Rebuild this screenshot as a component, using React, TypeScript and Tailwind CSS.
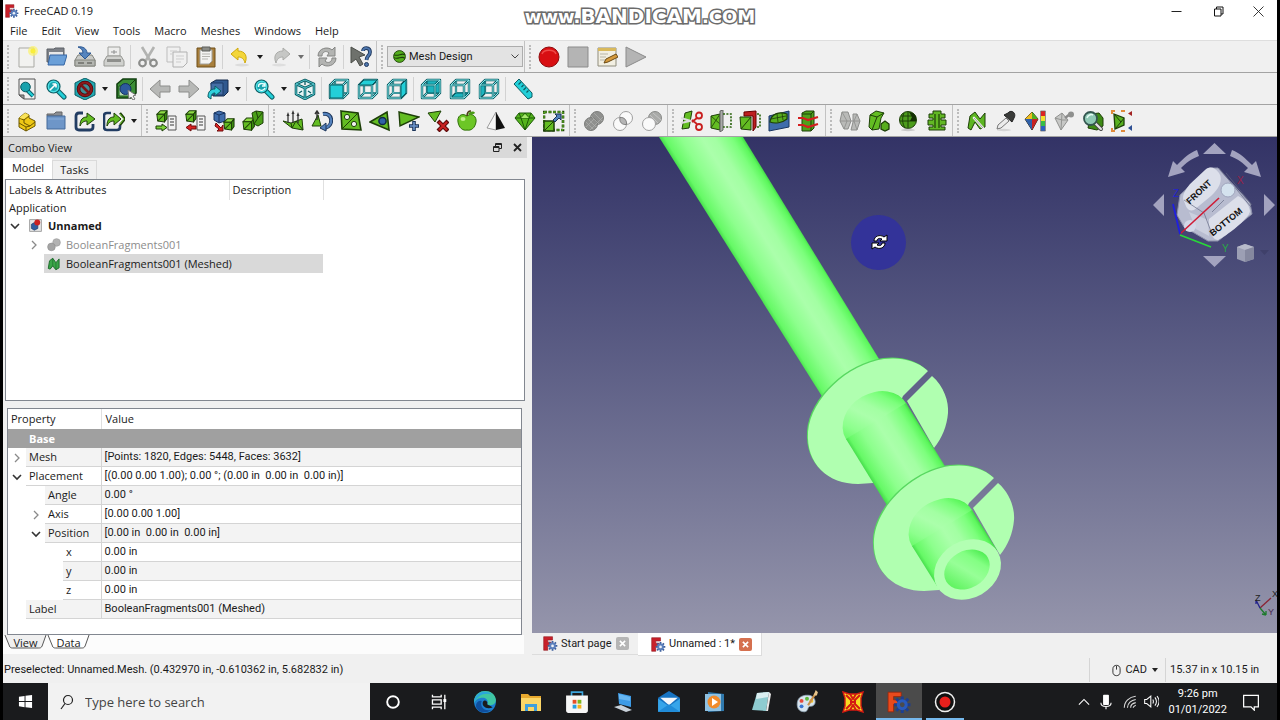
import React from "react";

type Kids = { children?: React.ReactNode };

const DARK = "#1d3f08";
const GREEN = "#63bd22";
const TEAL = "#23cfd8";
const TEAL_DARK = "#0b5c63";

function Ic({ children, size = "size-[22px]" }: Kids & { size?: string }) {
  return (
    <svg viewBox="0 0 22 22" className={`${size} shrink-0`} fill="none" aria-hidden="true">
      {children}
    </svg>
  );
}

function FreeCadLogo({ size = "size-[14px]" }: { size?: string }) {
  return (
    <Ic size={size}>
      <path d="M1 1H14V6H7V9H12V13H7V21H1Z" fill="#c8202a" stroke="#8a0f16" strokeWidth="0.8" />
      <g stroke="#3c5f9c" strokeWidth="2.6">
        <path d="M14 7.500V21.500M7 14.500H21M9 9.500L19 19.500M19 9.500L9 19.500" />
      </g>
      <circle cx="14" cy="14.500" r="4.800" fill="#5b80bd" />
      <circle cx="14" cy="14.500" r="2" fill="#eef2f8" />
    </Ic>
  );
}

type Face = "front" | "top" | "right" | "rear" | "bottom" | "left";
const facePath: Record<Face, string> = {
  front: "M2 7H15V20H2Z",
  top: "M2 7L7 2H20L15 7Z",
  right: "M15 7L20 2V15L15 20Z",
  rear: "M7 2H20V15H7Z",
  bottom: "M2 20L7 15H20L15 20Z",
  left: "M2 7L7 2V15L2 20Z",
};

function ViewCube({ face }: { face: Face }) {
  const back = "M7 2V15H20M7 15L2 20";
  const front = "M2 7H15V20H2ZM2 7L7 2H20V15L15 20M15 7L20 2";
  const near = face === "front" || face === "top" || face === "right";
  return (
    <Ic>
      <g strokeLinejoin="round">
        <path d={back} stroke={TEAL_DARK} strokeWidth="2.200" />
        <path d={back} stroke="#7fe3e8" strokeWidth="0.900" />
        {!near && <path d={facePath[face]} fill="#1cb4be" stroke={TEAL_DARK} />}
        <path d={front} stroke={TEAL_DARK} strokeWidth="2.400" />
        <path d={front} stroke="#8beaee" strokeWidth="1" />
        {near && <path d={facePath[face]} fill={TEAL} stroke={TEAL_DARK} />}
      </g>
    </Ic>
  );
}

function Lens({ inner }: { inner?: React.ReactNode }) {
  return (
    <>
      <path d="M13 13L19 19" stroke={TEAL_DARK} strokeWidth="5" strokeLinecap="round" />
      <path d="M13 13L19 19" stroke={TEAL} strokeWidth="3" strokeLinecap="round" />
      <circle cx="8.500" cy="8.500" r="6.500" fill="#4be0e6" stroke={TEAL_DARK} strokeWidth="1.200" />
      <circle cx="8.500" cy="8.500" r="4.500" fill="#1aa3ae" />
      {inner}
    </>
  );
}

function MeshBox({ x = 0, y = 0, s = 1, c = GREEN }: { x?: number; y?: number; s?: number; c?: string }) {
  return (
    <g transform={`translate(${x} ${y}) scale(${s})`} stroke={DARK} strokeWidth={1 / s} strokeLinejoin="round">
      <path d="M1 5L5 1H13L10 5Z" fill="#8fdc45" />
      <path d="M1 5H10V14L2 13Z" fill={c} />
      <path d="M10 5L13 1V10L10 14Z" fill="#3c8a10" />
      <path d="M2 13L10 5" />
    </g>
  );
}

const icons = {
  newDoc: (
    <Ic>
      <path d="M3 2H18V21H3Z" fill="#f2f2f0" stroke="#a9a9a4" />
      <circle cx="17" cy="5" r="5" fill="#fbf26a" opacity="0.700" />
      <circle cx="17" cy="5" r="2.500" fill="#f9ee3c" />
    </Ic>
  ),
  open: (
    <Ic>
      <path d="M2 3H9L10 2H19V16H2Z" fill="#7c8087" stroke="#5c6066" />
      <path d="M4 6H18V12H4Z" fill="#e8e8e8" />
      <path d="M3 19L5 9H22L19 19Z" fill="#6a9fd8" stroke="#3465a4" />
    </Ic>
  ),
  save: (
    <Ic>
      <path d="M1 14L4 9H18L21 14V20H1Z" fill="#c9cac7" stroke="#83857f" />
      <path d="M1 14H21V20H1Z" fill="#b4b6b1" stroke="#83857f" />
      <path d="M4 1C9 0 13 3 13 7H17L11 13L5 7H9C9 4 7 2 4 1Z" fill="#5584be" stroke="#2c5791" />
      <path d="M4 17H10M13 17H18" stroke="#6d6f6a" strokeWidth="1.500" />
    </Ic>
  ),
  print: (
    <Ic>
      <path d="M5 1H17V10H5Z" fill="#ededec" stroke="#a0a19d" />
      <path d="M8 6H14M11 4V8" stroke="#8f9090" />
      <path d="M1 15L4 10H18L21 15V20H1Z" fill="#d0d1ce" stroke="#979894" />
      <path d="M4 13H18V16H4Z" fill="#8e8f8c" />
    </Ic>
  ),
  cut: (
    <Ic>
      <path d="M5 1L14 16M17 1L8 16" stroke="#b2b3b1" strokeWidth="2.600" />
      <circle cx="5.500" cy="17" r="3.300" stroke="#8c8d8b" strokeWidth="2.200" />
      <circle cx="16.500" cy="17" r="3.300" stroke="#8c8d8b" strokeWidth="2.200" />
    </Ic>
  ),
  copy: (
    <Ic>
      <path d="M1 1H14V16H1Z" fill="#f0f0f0" stroke="#bdbdbd" />
      <path d="M7 6H21V17L17 21H7Z" fill="#f0f0f0" stroke="#b0b0b0" />
      <path d="M4 5H11M4 8H6M10 10H18M10 13H18M10 16H15" stroke="#cdcdcd" />
    </Ic>
  ),
  paste: (
    <Ic>
      <path d="M2 2H20V21H2Z" fill="#a87f3c" stroke="#6f4f18" />
      <path d="M5 4H17V15L14 18H5Z" fill="#f4f4f2" stroke="#a3a39e" />
      <path d="M7 1H15V5H7Z" fill="#8c8d88" stroke="#5d5e5a" />
      <path d="M7 8H15M7 10.500H15M7 13H13" stroke="#b5b5b0" />
    </Ic>
  ),
  undo: (
    <Ic>
      <ellipse cx="13" cy="19" rx="7" ry="1.500" fill="#dcdcdc" />
      <path d="M2 8L9 2V5C16 5 19 10 16 17C15 13 13 11 9 11V14Z" fill="#f3d63a" stroke="#cfa90c" />
    </Ic>
  ),
  redo: (
    <Ic>
      <ellipse cx="9" cy="19" rx="7" ry="1.500" fill="#dedede" />
      <path d="M20 8L13 2V5C6 5 3 10 6 17C7 13 9 11 13 11V14Z" fill="#c6c7c5" stroke="#aaaba8" />
    </Ic>
  ),
  refresh: (
    <Ic>
      <g fill="#b3b4b2" stroke="#858684">
        <path d="M2 10C2 2 12 0 16 4L19 1V10H11L13 7C10 4 6 6 6 10Z" />
        <path d="M20 12C20 20 10 22 6 18L3 21V12H11L9 15C12 18 16 16 16 12Z" />
      </g>
    </Ic>
  ),
  whats: (
    <Ic>
      <path d="M1 1L15 9L9 11L13 18L10 20L6 13L1 17Z" fill="#6e716c" stroke="#4b4e49" />
      <path d="M13 5C13 1 20 1 20 6C20 10 17 9 16.500 14" stroke="#20395e" strokeWidth="3.800" />
      <path d="M13 5C13 1 20 1 20 6C20 10 17 9 16.500 14" stroke="#4e76ad" strokeWidth="2" />
      <circle cx="16.500" cy="18.500" r="2" fill="#4e76ad" stroke="#20395e" />
    </Ic>
  ),
  record: (
    <Ic>
      <circle cx="11" cy="11" r="10" fill="#d80f12" stroke="#8f0a0c" />
      <path d="M4 8C6 3 16 3 18 8" stroke="#ee4a48" strokeWidth="1.500" />
    </Ic>
  ),
  stop: (
    <Ic>
      <path d="M1 1H21V21H1Z" fill="#b4b4b4" stroke="#8b8b8b" />
    </Ic>
  ),
  macro: (
    <Ic>
      <path d="M2 2H20V20H2Z" fill="#f2efe2" stroke="#8f8c7c" />
      <path d="M2 2H20V5H2Z" fill="#d9b95c" />
      <path d="M4 8H12M4 11H10M4 14H9" stroke="#b7b5a8" />
      <path d="M8 17L10 13L20 8L22 11L12 16Z" fill="#d59a3d" stroke="#6b4a14" />
    </Ic>
  ),
  play: (
    <Ic>
      <path d="M1 1L21 11L1 21Z" fill="#b4b4b4" stroke="#8b8b8b" />
    </Ic>
  ),
  fitAll: (
    <Ic>
      <path d="M3 1H19V21H8L3 17Z" fill="#f1f1f1" stroke="#555" />
      <path d="M3 17H8V21Z" fill="#9b9b9b" stroke="#555" />
      <path d="M11 12L17 18" stroke={TEAL_DARK} strokeWidth="4" />
      <path d="M11 12L17 18" stroke={TEAL} strokeWidth="2.200" />
      <circle cx="9.500" cy="9" r="4.800" fill="#18a2ad" stroke={TEAL_DARK} />
    </Ic>
  ),
  fitSel: (
    <Ic>
      <Lens inner={<path d="M5 12L11 6M11 6H7.500M11 6V9.500" stroke="#fff" strokeWidth="1.600" />} />
    </Ic>
  ),
  drawStyle: (
    <Ic>
      <path d="M11 0L21 5V17L11 22L1 17V5Z" fill="#22a8b2" stroke={TEAL_DARK} />
      <circle cx="11" cy="11" r="6.500" fill="#3f8f97" stroke="#4a0507" strokeWidth="3.600" />
      <circle cx="11" cy="11" r="6.500" stroke="#8c1a1d" strokeWidth="2.200" />
      <path d="M6.500 6.500L15.500 15.500" stroke="#7d1316" strokeWidth="2.600" />
    </Ic>
  ),
  boundBox: (
    <Ic>
      <path d="M2 6L8 1H21V15L16 20H2Z" fill="#3b8e36" stroke="#123f10" strokeWidth="1.600" />
      <path d="M4 8H15V18H4Z" fill="#b9dcb4" stroke="#1a5a17" />
      <path d="M15 7L20 2" stroke="#0f3b0d" />
      <circle cx="10.500" cy="11" r="5.500" fill="#2c5a9c" stroke="#14325f" />
      <path d="M13 12L21 17L18 18L20 21L18 22L16 19L14 21Z" fill="#f5f5f5" stroke="#777" />
    </Ic>
  ),
  back: (
    <Ic>
      <path d="M1 11L11 2V8H21V14H11V20Z" fill="#b7b8b6" stroke="#8c8d8b" />
    </Ic>
  ),
  forward: (
    <Ic>
      <path d="M21 11L11 2V8H1V14H11V20Z" fill="#b7b8b6" stroke="#8c8d8b" />
    </Ic>
  ),
  linkGo: (
    <Ic>
      <path d="M4 5L9 2H21V14L17 18H6Z" fill="#30598f" stroke="#152b4c" />
      <path d="M4 5H16V17H4Z" fill="#446fa6" stroke="#1d3a66" />
      <path d="M1 19C1 13 4 11 8 11V8L14 13L8 18V15C5 15 4 17 4 21Z" fill="#2fd0dc" stroke={TEAL_DARK} />
    </Ic>
  ),
  zoomSync: (
    <Ic>
      <Lens inner={<path d="M5.500 9C5 5 11 4 12 8M12 5V8H9M12 10C11 13 7 13 6 11" stroke="#e9ffff" strokeWidth="1.400" />} />
    </Ic>
  ),
  iso: (
    <Ic>
      <g strokeLinejoin="round">
        <path d="M11 2L20 6V16L11 21L2 16V6ZM2 6L11 10L20 6M11 10V21" fill="#e6f6f7" stroke={TEAL_DARK} strokeWidth="2.600" />
        <path d="M11 2L20 6V16L11 21L2 16V6ZM2 6L11 10L20 6M11 10V21" stroke="#5fd4da" strokeWidth="0.900" />
        <path d="M11 3V7M5 15L8 13M17 15L14 13" stroke={TEAL_DARK} strokeWidth="1.300" />
      </g>
    </Ic>
  ),
  ruler: (
    <Ic>
      <path d="M2 6L7 1L20 15V19L16 21Z" fill={TEAL} stroke={TEAL_DARK} />
      <path d="M9 4L6.500 6.500M11.500 7L9.500 9M14 9.500L11.500 12M16.500 12.500L14.500 14.500" stroke={TEAL_DARK} strokeWidth="1.200" />
    </Ic>
  ),
  part: (
    <Ic>
      <path d="M3 8L9 3L13 5V8L19 11V16L10 21L3 17Z" fill="#eec816" stroke="#6b5600" strokeLinejoin="round" />
      <path d="M3 8L8 10L13 6M8 10V13L14 16L19 12M3 13L10 17V21M14 16L10 17" stroke="#6b5600" />
      <path d="M3 8L9 3L13 5L8 9Z" fill="#f9e35a" />
    </Ic>
  ),
  group: (
    <Ic>
      <path d="M2 4H9L11 2H17V6H2Z" fill="#8a8d92" stroke="#666" />
      <path d="M2 6H20V19H2Z" fill="#6e96c8" stroke="#456a9b" />
      <path d="M3 9H19" stroke="#89aedb" />
    </Ic>
  ),
  linkMake: (
    <Ic>
      <path d="M9 3H5C3 3 2 4 2 6V17C2 19 3 20 5 20H16C18 20 19 19 19 17V14" stroke="#223d63" strokeWidth="2.800" />
      <path d="M6 16C6 9 9 7 13 7V3L21 9L13 15V11C10 11 8 12 6 16Z" fill={GREEN} stroke={DARK} />
    </Ic>
  ),
  linkRel: (
    <Ic>
      <path d="M8 3H4C2 3 1 4 1 6V17C1 19 2 20 4 20H14C16 20 17 19 17 17V15" stroke="#223d63" strokeWidth="2.600" />
      <path d="M4 16C4 9 7 7 11 7V3L18 9L11 15V11C8 11 6 12 4 16Z" fill={GREEN} stroke={DARK} />
      <path d="M17 3L22 9L17 15" stroke={DARK} strokeWidth="2.400" />
      <path d="M17 4L21 9L17 14" stroke="#76cc36" />
    </Ic>
  ),
  meshImport: (
    <Ic>
      <MeshBox x={1} y={0} s={0.85} />
      <path d="M13 6H21V20H13Z" fill="#f3f3f3" stroke="#555" />
      <path d="M15 9H19M15 12H19M15 15H19" stroke="#777" strokeWidth="1.500" />
      <path d="M1 16H7V14L12 17.500L7 21V19H1Z" fill="#7bd13a" stroke={DARK} />
    </Ic>
  ),
  meshExport: (
    <Ic>
      <MeshBox x={1} y={0} s={0.85} />
      <path d="M13 6H21V20H13Z" fill="#f3f3f3" stroke="#555" />
      <path d="M15 9H19M15 12H19M15 15H19" stroke="#777" strokeWidth="1.500" />
      <path d="M12 16H7V14L2 17.500L7 21V19H12Z" fill="#dc2222" stroke="#6d0b0b" />
    </Ic>
  ),
  fromShape: (
    <Ic>
      <path d="M1 3L6 1L12 3V11L6 13L1 10Z" fill="#3f6cab" stroke="#193560" />
      <path d="M1 3L6 5L12 3M6 5V13" stroke="#193560" />
      <path d="M3 13L8 18L10 15V21H4L6 19L2 16Z" fill="#dc2222" stroke="#6d0b0b" />
      <MeshBox x={10} y={8} s={0.85} />
    </Ic>
  ),
  harmonize: (
    <Ic>
      <MeshBox x={0} y={7} s={0.95} />
      <path d="M10 3L14 1L21 2V13L16 16L12 14Z" fill="#4ba018" stroke={DARK} />
      <path d="M14 1L16 8L21 2M12 14L16 8" stroke={DARK} />
    </Ic>
  ),
  normals: (
    <Ic>
      <path d="M1 11L9 13L20 9L21 20L10 18Z" fill={GREEN} stroke={DARK} />
      <path d="M9 13L10 18L14 11L21 20" stroke={DARK} />
      <path d="M6 13V5M11 13V3M16 13V5" stroke="#333" strokeWidth="1.300" />
      <path d="M4.500 6L6 2L7.500 6ZM9.500 4L11 0L12.500 4ZM14.500 6L16 2L17.500 6Z" fill="#333" />
    </Ic>
  ),
  flip: (
    <Ic>
      <path d="M1 16L7 5L10 16Z" fill={GREEN} stroke={DARK} />
      <path d="M6 10V1M4 4L6 1L8 4" stroke="#333" strokeWidth="1.400" />
      <path d="M12 4C22 2 23 16 14 18" stroke="#1a3358" strokeWidth="4" />
      <path d="M12 4C22 2 23 16 14 18" stroke="#5482bd" strokeWidth="2.200" />
      <path d="M15 13V21L9 18Z" fill="#5482bd" stroke="#1a3358" />
    </Ic>
  ),
  fillHoles: (
    <Ic>
      <path d="M1 1L18 3L21 20L2 19Z" fill={GREEN} stroke={DARK} strokeWidth="1.600" />
      <path d="M2 19L18 3" stroke={DARK} />
      <circle cx="7" cy="7" r="2.600" fill="#f0f0f0" stroke={DARK} />
      <circle cx="14" cy="14" r="2.600" fill="#f0f0f0" stroke={DARK} />
    </Ic>
  ),
  closeHole: (
    <Ic>
      <path d="M1 12L18 2L20 20Z" fill={GREEN} stroke={DARK} strokeWidth="1.600" />
      <circle cx="13.500" cy="11" r="3.600" fill="#2f62a6" stroke="#10284c" strokeWidth="1.500" />
    </Ic>
  ),
  addTri: (
    <Ic>
      <path d="M1 2L21 7L2 16Z" fill={GREEN} stroke={DARK} strokeWidth="1.400" />
      <path d="M16 11V21M11 16H21" stroke="#1a3358" strokeWidth="3.600" />
      <path d="M16 12V20M12 16H20" stroke="#6d95cb" strokeWidth="1.600" />
    </Ic>
  ),
  removeTri: (
    <Ic>
      <path d="M1 3L14 1L8 12Z" fill={GREEN} stroke={DARK} />
      <path d="M11 11L21 21M21 11L11 21" stroke="#5f0a0a" strokeWidth="4.200" />
      <path d="M12 12L20 20M20 12L12 20" stroke="#c92020" strokeWidth="2.200" />
    </Ic>
  ),
  apple: (
    <Ic>
      <path d="M11 6C5 2 1 7 2 12C3 18 7 21 11 20C15 21 19 18 20 12C21 7 16 2 11 6Z" fill="#6cc626" stroke="#2f7008" />
      <path d="M11 6C11 3 12 1 15 1" stroke="#4b3a12" strokeWidth="1.500" />
      <path d="M12 4C14 1 18 1 19 3C17 5 14 5 12 4Z" fill="#4b9a17" />
      <ellipse cx="7" cy="9" rx="2.500" ry="2" fill="#bff08a" />
    </Ic>
  ),
  curvature: (
    <Ic>
      <path d="M11 2L2 18L11 20Z" fill="#f8f8f8" stroke="#777" strokeWidth="0.700" />
      <path d="M11 2L20 18L11 20Z" fill="#111" />
    </Ic>
  ),
  gem: (
    <Ic>
      <path d="M5 3H17L21 8L11 20L1 8Z" fill="#55b41d" stroke="#1e5c08" />
      <path d="M1 8H21M7 8L11 20L15 8M5 3L7 8L11 3L15 8L17 3" stroke="#1e5c08" />
      <path d="M7 8L11 4L15 8Z" fill="#a7e86d" />
    </Ic>
  ),
  scale: (
    <Ic>
      <path d="M1 2H20V20H1Z" stroke={DARK} strokeWidth="2.600" strokeDasharray="3 1.500" />
      <path d="M1 2H20V20H1Z" stroke="#6fc92e" strokeWidth="1" strokeDasharray="3 1.500" />
      <path d="M1 11H11V21H1Z" fill={GREEN} stroke={DARK} strokeWidth="1.500" />
      <path d="M1 21L11 11" stroke={DARK} />
      <path d="M10 10L14 6L12 4H18V10L16 8L12 12Z" fill="#5280bb" stroke="#1a3358" />
    </Ic>
  ),
  union: (
    <Ic>
      <circle cx="14" cy="8" r="6.500" fill="#8f908e" stroke="#7c7d7b" />
      <circle cx="8" cy="14" r="6.500" fill="#8f908e" stroke="#7c7d7b" />
      <path d="M3 12L10 19M5 9L13 17M8 6L16 14M11 3L19 11M3 17L11 9M7 20L20 7" stroke="#b0b1af" strokeWidth="0.700" />
    </Ic>
  ),
  intersect: (
    <Ic>
      <circle cx="14" cy="8" r="6.500" fill="#fafafa" stroke="#a0a0a0" />
      <circle cx="8" cy="14" r="6.500" fill="#fafafa" stroke="#a0a0a0" />
      <path d="M8 7.500C12 7 15 10 14.500 14.500C10 15 7 12 8 7.500Z" fill="#b5b5b5" stroke="#808080" />
    </Ic>
  ),
  difference: (
    <Ic>
      <circle cx="14" cy="8" r="6.500" fill="#a9aaa8" stroke="#8a8b89" />
      <path d="M9 5L17 13M12 3L20 10" stroke="#c4c4c4" />
      <circle cx="8" cy="14" r="6.500" fill="#fafafa" stroke="#a0a0a0" />
    </Ic>
  ),
  cutMesh: (
    <Ic>
      <path d="M4 3L11 1L8 18L1 19Z" fill={GREEN} stroke={DARK} />
      <path d="M0 8L13 12M0 13L13 10" stroke="#dcdcdc" strokeWidth="2" />
      <circle cx="18" cy="5.500" r="3" stroke="#c81f1f" strokeWidth="1.800" />
      <circle cx="18" cy="17" r="3" stroke="#c81f1f" strokeWidth="1.800" />
      <path d="M16 8L11 12M16 14L11 10" stroke="#c81f1f" strokeWidth="1.800" />
    </Ic>
  ),
  trimMesh: (
    <Ic>
      <path d="M1 6L10 4V20L1 18Z" fill={GREEN} stroke={DARK} />
      <path d="M1 18L10 4M1 6L10 14" stroke={DARK} strokeWidth="0.800" />
      <path d="M10 1L13 0V20L10 22Z" fill="#aaaba9" stroke="#636462" />
      <path d="M13 4H21V17H13" stroke="#28620a" strokeWidth="1.600" strokeDasharray="2 1.400" />
    </Ic>
  ),
  trimPlane: (
    <Ic>
      <path d="M5 2L17 1V17L14 21V6H5Z" fill="#bd2020" stroke="#600" />
      <path d="M1 7H12V20L2 19Z" fill={GREEN} stroke={DARK} />
      <path d="M2 19L12 7" stroke={DARK} />
      <path d="M18 4H21V17H17" stroke="#28620a" strokeWidth="1.600" strokeDasharray="2 1.400" />
    </Ic>
  ),
  section: (
    <Ic>
      <path d="M1 6L21 1V17L1 21Z" fill="#3f6cab" stroke="#193560" />
      <path d="M2 12C3 4 11 1 19 4V9C14 13 7 14 2 12Z" fill="#57ad1e" stroke={DARK} strokeWidth="1.200" />
      <path d="M3 9L18 6M9 4L10 12M14 3L15 10" stroke={DARK} strokeWidth="0.800" />
    </Ic>
  ),
  crossSec: (
    <Ic>
      <path d="M5 3L9 1H17V18L14 21H5Z" fill="#4ea21b" stroke={DARK} />
      <path d="M14 4V21M5 4H14L17 1" stroke={DARK} />
      <path d="M1 8H6L11 10L21 7M1 15H6L11 17L21 14" stroke="#d42020" strokeWidth="2.200" />
    </Ic>
  ),
  merge: (
    <Ic>
      <path d="M3 2H9L12 11L9 19H5L1 11Z" fill="#b9bab8" stroke="#8d8e8c" />
      <path d="M14 4H18L21 11L18 20H12L14 12Z" fill="#b9bab8" stroke="#8d8e8c" />
      <path d="M1 11H21M3 2L8 11L5 19M18 4L15 11L18 20" stroke="#8d8e8c" strokeWidth="0.800" />
    </Ic>
  ),
  split: (
    <Ic>
      <path d="M2 5L8 1L16 3L13 8L11 19L4 20L1 17Z" fill={GREEN} stroke={DARK} />
      <path d="M2 5L9 7L16 3M9 7L4 20" stroke={DARK} />
      <path d="M13 14L17 11L21 14V19L17 21L13 19Z" fill="#57ad1e" stroke={DARK} strokeWidth="1.300" />
    </Ic>
  ),
  solidEval: (
    <Ic>
      <circle cx="11" cy="10" r="8.500" fill="#4c9d1b" stroke={DARK} />
      <path d="M4 6H18M3 11H19M7 3C5 8 5 13 8 18M11 2V18" stroke={DARK} />
      <path d="M12 2L15 7L13 11H19V6L16 3Z" fill="#143004" />
      <ellipse cx="11" cy="20" rx="7" ry="1.200" fill="#c9c9c9" />
    </Ic>
  ),
  segments: (
    <Ic>
      <path d="M7 1H15V4H19V8H15V10H20V15H15V17H19V20H3V17H7V15H2V10H7V8H3V4H7Z" fill="#62b824" stroke={DARK} />
      <path d="M9 4V18M13 4V18" stroke={DARK} strokeWidth="1.200" />
    </Ic>
  ),
  evaluate: (
    <Ic>
      <path d="M2 18L4 6L9 2L14 9L19 3V17L14 19L9 12L5 20Z" fill="#5cb521" stroke={DARK} />
      <path d="M8 8L17 18" stroke="#f0f0f0" strokeWidth="2.600" strokeLinecap="round" />
      <path d="M8 8L17 18" stroke="#8c8c8c" strokeWidth="0.800" />
    </Ic>
  ),
  dropper: (
    <Ic>
      <ellipse cx="9" cy="20" rx="7" ry="1.200" fill="#d5d5d5" />
      <path d="M2 19L3 15L11 8L14 11L6 18Z" fill="#ececec" stroke="#777" />
      <path d="M9 5L13 3C16 -1 22 3 19 8L17 12Z" fill="#3a3b39" stroke="#222" strokeLinejoin="round" />
    </Ic>
  ),
  colors: (
    <Ic>
      <path d="M8 2L1 9L8 20L14 9Z" fill="#efc52a" stroke="#222" />
      <path d="M8 2L1 9H8Z" fill="#eebc22" />
      <path d="M8 2L14 9H8Z" fill="#54b01d" />
      <path d="M1 9H8V20Z" fill="#2f60aa" />
      <path d="M14 9H8V20Z" fill="#c72222" />
      <path d="M17 1H21V6H17Z" fill="#dc2222" />
      <path d="M17 6H21V11H17Z" fill="#f4e02c" />
      <path d="M17 11H21V16H17Z" fill="#36bd45" />
      <path d="M17 16H21V21H17Z" fill="#2a5fc0" />
      <path d="M16.500 1H21.500V21H16.500Z" stroke="#666" strokeWidth="0.700" />
    </Ic>
  ),
  grayGem: (
    <Ic>
      <path d="M9 3L2 8L8 20L15 10Z" fill="#c7c8c6" stroke="#8f908e" />
      <path d="M9 3L8 20M2 8L9 10L15 10" stroke="#959694" />
      <path d="M12 8L17 4" stroke="#8a8a8a" strokeWidth="2.500" />
      <circle cx="18" cy="4.500" r="3" fill="#8f908e" />
    </Ic>
  ),
  inspect: (
    <Ic>
      <path d="M9 4L17 3L21 8V16L15 20L6 18Z" fill="#3e8a15" stroke={DARK} />
      <path d="M13 13L19 19" stroke="#444" strokeWidth="4" strokeLinecap="round" />
      <path d="M13 13L19 19" stroke="#e3e3e3" strokeWidth="2.200" strokeLinecap="round" />
      <circle cx="8.500" cy="8.500" r="6.500" fill="#8fc9b5" stroke="#33564f" strokeWidth="1.800" />
      <path d="M5 8C6 5 9 4 11 5" stroke="#e6fbf4" strokeWidth="1.500" />
    </Ic>
  ),
  bbox: (
    <Ic>
      <path d="M3 4L13 8V15L4 19Z" fill="#58b01f" stroke={DARK} strokeWidth="1.300" />
      <path d="M3 4L10 12L4 19M10 12L13 8" stroke={DARK} />
      <path d="M1 4V1H4M10 1H14M1 18V21H4M10 21H14" stroke="#e08a3a" strokeWidth="2" />
      <path d="M21 1V6L17 3.500Z" fill="#a22323" />
      <path d="M21 15V21L17 18Z" fill="#2e4f93" />
    </Ic>
  ),
};

type IconName = keyof typeof icons;

function Tool({ name, label }: { name: IconName; label: string }) {
  return (
    <button type="button" aria-label={label} className="flex h-[26px] w-[29px] items-center justify-center hover:bg-sky-100">
      {icons[name]}
    </button>
  );
}

function CubeTool({ face }: { face: Face }) {
  return (
    <button type="button" aria-label={`${face} view`} className="flex h-[26px] w-[29px] items-center justify-center hover:bg-sky-100">
      <ViewCube face={face} />
    </button>
  );
}

function Caret({ label, color = "#1b1b1b" }: { label: string; color?: string }) {
  return (
    <button type="button" aria-label={label} className="flex h-[26px] w-3 items-center justify-center">
      <svg viewBox="0 0 6 4" className="h-1 w-1.5">
        <path d="M0 0H6L3 4Z" fill={color} />
      </svg>
    </button>
  );
}

const Sep = () => <span className="mx-[2px] h-6 w-px bg-[#d2d2d2]" />;

function ToolGroup({ children, last = false, wide = false }: Kids & { last?: boolean; wide?: boolean }) {
  return (
    <div className={`${last ? "" : "border-r border-[#c2c2c2]"} ${wide ? "pr-[3px]" : last ? "" : "pr-px"} flex items-center self-stretch`}>
      <span className="flex w-[9px] justify-center">
        <span className="h-6 border-l-2 border-dotted border-[#bcbcbc]" />
      </span>
      {children}
    </div>
  );
}

function Bar({ children, label }: Kids & { label: string }) {
  return (
    <div role="toolbar" aria-label={label} className="flex h-8 shrink-0 items-center overflow-hidden border-b border-[#a3a3a3] bg-[#f0f0f0]">
      {children}
    </div>
  );
}

function Toolbars() {
  return (
    <>
      <Bar label="File and workbench">
        <ToolGroup>
          <Tool name="newDoc" label="New" />
          <Tool name="open" label="Open" />
          <Tool name="save" label="Save" />
          <Tool name="print" label="Print" />
          <Sep />
          <Tool name="cut" label="Cut" />
          <Tool name="copy" label="Copy" />
          <Tool name="paste" label="Paste" />
          <Sep />
          <Tool name="undo" label="Undo" />
          <Caret label="Undo history" />
          <Tool name="redo" label="Redo" />
          <Caret label="Redo history" color="#6f6f6f" />
          <Sep />
          <Tool name="refresh" label="Refresh" />
          <Sep />
          <Tool name="whats" label="What's this?" />
        </ToolGroup>
        <ToolGroup>
          <label className="relative ml-px flex h-[21px] w-[136px] items-center border border-[#adadad] bg-[#e3e3e3] pl-[5px]">
            <Ic size="size-[13px]">
              <circle cx="11" cy="11" r="10" fill="#55ae1e" stroke={DARK} strokeWidth="1.500" />
              <path d="M2 8C8 12 15 4 20 8M2 13C8 17 15 9 20 14" stroke={DARK} strokeWidth="1.800" />
            </Ic>
            <select aria-label="Workbench" defaultValue="Mesh Design" className="min-w-0 flex-1 appearance-none bg-transparent pl-[3px] font-['Roboto','Open_Sans',sans-serif] outline-none">
              <option>Mesh Design</option>
              <option>Part</option>
            </select>
            <svg viewBox="0 0 8 5" className="pointer-events-none mr-[3px] h-[5px] w-2" fill="none">
              <path d="M0.500 0.500L4 4L7.500 0.500" stroke="#444" />
            </svg>
          </label>
        </ToolGroup>
        <ToolGroup last>
          <Tool name="record" label="Record macro" />
          <Tool name="stop" label="Stop macro" />
          <Tool name="macro" label="Macros" />
          <Tool name="play" label="Run macro" />
        </ToolGroup>
      </Bar>
      <Bar label="View">
        <ToolGroup last>
          <Tool name="fitAll" label="Fit all" />
          <Tool name="fitSel" label="Fit selection" />
          <Tool name="drawStyle" label="Draw style" />
          <Caret label="Draw styles" />
          <Tool name="boundBox" label="Bounding box" />
          <Sep />
          <Tool name="back" label="Back" />
          <Tool name="forward" label="Forward" />
          <Tool name="linkGo" label="Go to linked object" />
          <Caret label="Link actions" />
          <Sep />
          <Tool name="zoomSync" label="Sync view" />
          <Caret label="Sync options" />
          <Tool name="iso" label="Isometric" />
          <Sep />
          <CubeTool face="front" />
          <CubeTool face="top" />
          <CubeTool face="right" />
          <Sep />
          <CubeTool face="rear" />
          <CubeTool face="bottom" />
          <CubeTool face="left" />
          <Sep />
          <Tool name="ruler" label="Measure distance" />
        </ToolGroup>
      </Bar>
      <Bar label="Mesh">
        <ToolGroup>
          <Tool name="part" label="Create part" />
          <Tool name="group" label="Create group" />
          <Tool name="linkMake" label="Make link" />
          <Tool name="linkRel" label="Make sub-link" />
          <Caret label="Link options" />
        </ToolGroup>
        <ToolGroup>
          <Tool name="meshImport" label="Import mesh" />
          <Tool name="meshExport" label="Export mesh" />
          <Tool name="fromShape" label="Mesh from shape" />
          <Tool name="harmonize" label="Refinement" />
        </ToolGroup>
        <ToolGroup>
          <Tool name="normals" label="Harmonize normals" />
          <Tool name="flip" label="Flip normals" />
          <Tool name="fillHoles" label="Fill holes" />
          <Tool name="closeHole" label="Close hole" />
          <Tool name="addTri" label="Add triangle" />
          <Tool name="removeTri" label="Remove components" />
          <Tool name="apple" label="Smooth" />
          <Tool name="curvature" label="Curvature" />
          <Tool name="gem" label="Decimate" />
          <Tool name="scale" label="Scale" />
        </ToolGroup>
        <ToolGroup>
          <Tool name="union" label="Union" />
          <Tool name="intersect" label="Intersection" />
          <Tool name="difference" label="Difference" />
        </ToolGroup>
        <ToolGroup wide>
          <Tool name="cutMesh" label="Cut mesh" />
          <Tool name="trimMesh" label="Trim mesh" />
          <Tool name="trimPlane" label="Trim by plane" />
          <Tool name="section" label="Section by plane" />
          <Tool name="crossSec" label="Cross-sections" />
        </ToolGroup>
        <ToolGroup>
          <Tool name="merge" label="Merge" />
          <Tool name="split" label="Split components" />
          <Tool name="solidEval" label="Regular solid" />
          <Tool name="segments" label="Segments" />
        </ToolGroup>
        <ToolGroup last>
          <Tool name="evaluate" label="Evaluate and repair" />
          <Tool name="dropper" label="Face info" />
          <Tool name="colors" label="Vertex curvature" />
          <Tool name="grayGem" label="Curvature info" />
          <Tool name="inspect" label="Check solid" />
          <Tool name="bbox" label="Bounding box info" />
        </ToolGroup>
      </Bar>
    </>
  );
}

function Chevron({ open }: { open: boolean }) {
  return (
    <svg viewBox="0 0 10 10" className="size-[10px] shrink-0" fill="none">
      {open ? (
        <path d="M1 3L5 7L9 3" stroke="#333" strokeWidth="1.600" />
      ) : (
        <path d="M3 1L7 5L3 9" stroke="#8a8a8a" strokeWidth="1.300" />
      )}
    </svg>
  );
}

function ModelTree() {
  return (
    <div className="mx-0.5 h-[222px] shrink-0 border border-[#828790] bg-white">
      <table className="w-[317px] table-fixed border-collapse text-left">
        <colgroup>
          <col className="w-[223px]" />
          <col className="w-[94px]" />
        </colgroup>
        <thead>
          <tr className="h-5">
            <th className="border-r border-[#e0e0e0] p-0 pl-[3px] font-normal">Labels &amp; Attributes</th>
            <th className="border-r border-[#e0e0e0] p-0 pl-[3px] font-normal">Description</th>
          </tr>
        </thead>
        <tbody>
          <tr className="h-4">
            <td colSpan={2} className="p-0 pl-[3px]">Application</td>
          </tr>
          <tr className="h-[19px]">
            <td colSpan={2} className="p-0">
              <div className="flex items-center pl-1">
                <Chevron open />
                <span className="ml-[9px] mr-[6px] flex">
                  <Ic size="size-[13px]">
                    <path d="M1 1H21V21H1Z" fill="#e6e6e6" stroke="#9a9a9a" strokeWidth="1.500" />
                    <path d="M4 9L9 6L15 8V16L9 19L4 16Z" fill="#2f5da0" stroke="#16325d" />
                    <circle cx="14" cy="6" r="5" fill="#cc2222" />
                  </Ic>
                </span>
                <span className="font-bold">Unnamed</span>
              </div>
            </td>
          </tr>
          <tr className="h-[19px]">
            <td colSpan={2} className="p-0">
              <div className="flex items-center pl-[23px] text-[#8c8c8c]">
                <Chevron open={false} />
                <span className="ml-[8px] mr-[5px] flex">
                  <Ic size="size-[14px]">
                    <circle cx="15" cy="7" r="6" fill="#b3b3b3" stroke="#999" />
                    <circle cx="7" cy="14" r="6" fill="#a5a5a5" stroke="#909090" />
                  </Ic>
                </span>
                BooleanFragments001
              </div>
            </td>
          </tr>
          <tr className="h-[19px]">
            <td colSpan={2} className="p-0">
              <div className="ml-[38px] flex h-[19px] items-center bg-[#d9d9d9] pl-[3px]">
                <span className="mr-[5px] flex">
                  <Ic size="size-[14px]">
                    <path d="M2 18L4 6L9 2L14 9L19 3V17L14 20L9 14L5 19Z" fill="#3aa648" stroke="#1c6a2a" strokeWidth="1.500" />
                    <path d="M9 2V14M14 9V20" stroke="#1c6a2a" />
                  </Ic>
                </span>
                BooleanFragments001 (Meshed)
              </div>
            </td>
          </tr>
        </tbody>
      </table>
    </div>
  );
}

type Prop = { name: string; value: string; depth: 0 | 1 | 2; state?: "open" | "closed" };
const props: Prop[] = [
  { name: "Mesh", value: "[Points: 1820, Edges: 5448, Faces: 3632]", depth: 0, state: "closed" },
  { name: "Placement", value: "[(0.00 0.00 1.00); 0.00 °; (0.00 in  0.00 in  0.00 in)]", depth: 0, state: "open" },
  { name: "Angle", value: "0.00 °", depth: 1 },
  { name: "Axis", value: "[0.00 0.00 1.00]", depth: 1, state: "closed" },
  { name: "Position", value: "[0.00 in  0.00 in  0.00 in]", depth: 1, state: "open" },
  { name: "x", value: "0.00 in", depth: 2 },
  { name: "y", value: "0.00 in", depth: 2 },
  { name: "z", value: "0.00 in", depth: 2 },
  { name: "Label", value: "BooleanFragments001 (Meshed)", depth: 0 },
];
const indent = ["w-[18px]", "w-[37px]", "w-[55px]"];

function PropertyTable() {
  return (
    <div className="ml-1 mr-[5px] mt-[7px] flex-1 border border-[#828790] bg-white">
      <table className="w-full table-fixed border-collapse text-left">
        <colgroup>
          <col className="w-[93px]" />
          <col />
        </colgroup>
        <thead>
          <tr className="h-5">
            <th className="border-r border-[#e0e0e0] p-0 pl-[3px] font-normal">Property</th>
            <th className="p-0 pl-1 font-normal">Value</th>
          </tr>
        </thead>
        <tbody>
          <tr className="h-[19px] bg-[#a0a0a0] text-white">
            <th colSpan={2} className="p-0 pl-[21px] font-bold">Base</th>
          </tr>
          {props.map((p, i) => (
            <tr key={p.name}>
              <td className="border-r border-[#d4d4d4] p-0">
                <div className="flex h-[19px]">
                  <span className={`${indent[p.depth]} flex shrink-0 items-center justify-end pr-1`}>
                    {p.state && <Chevron open={p.state === "open"} />}
                  </span>
                  <span className={`${i % 2 ? "bg-white" : "bg-[#f3f3f3]"} flex flex-1 items-center border-b border-[#d4d4d4] pl-[3px]`}>{p.name}</span>
                </div>
              </td>
              <td className="p-0">
                <div className={`${i % 2 ? "bg-white" : "bg-[#f3f3f3]"} flex h-[19px] items-center whitespace-pre border-b border-[#d4d4d4] pl-[3px] font-['Roboto','Open_Sans',sans-serif]`}>{p.value}</div>
              </td>
            </tr>
          ))}
        </tbody>
      </table>
    </div>
  );
}

function BottomTab({ label, active }: { label: string; active?: boolean }) {
  return (
    <button type="button" className="relative flex h-[15px] w-[43px] items-center justify-center">
      <svg viewBox="0 0 44 15" preserveAspectRatio="none" className="absolute inset-0 h-[15px] w-[43px]" fill="none">
        <path d="M1 0L6 12C7 13 8 13 9 13H35C37 13 38 13 39 11L43 0" fill={active ? "#fff" : "#f0f0f0"} stroke="#555" />
      </svg>
      <span className="relative">{label}</span>
    </button>
  );
}

function ComboView() {
  return (
    <section className="flex w-[524px] shrink-0 flex-col" aria-label="Combo View">
      <div className="flex h-[21px] shrink-0 items-center bg-[#d9d9d9] pl-[5px] text-[#222]">
        <span className="flex-1">Combo View</span>
        <button type="button" aria-label="Float" className="flex w-5 justify-center">
          <svg viewBox="0 0 9 9" className="size-[9px]" fill="none" stroke="#222">
            <path d="M2.500 0.500H8.500V5.500H6M2.500 0.500V3M0.500 3.500H6V8.500H0.500ZM2.500 1.500H8.500M0.500 4.500H6" />
          </svg>
        </button>
        <button type="button" aria-label="Close panel" className="flex w-5 justify-center">
          <svg viewBox="0 0 9 9" className="size-[9px]" fill="none">
            <path d="M1 1L8 8M8 1L1 8" stroke="#222" strokeWidth="1.800" />
          </svg>
        </button>
      </div>
      <div role="tablist" className="flex h-[21px] shrink-0 items-end pl-px">
        <button type="button" role="tab" aria-selected="true" className="h-[21px] w-12 bg-white pb-0.5">Model</button>
        <button type="button" role="tab" aria-selected="false" className="h-[19px] w-[45px] border border-b-0 border-[#dadada] bg-[#f0f0f0]">Tasks</button>
      </div>
      <div className="flex flex-1 flex-col">
        <ModelTree />
        <PropertyTable />
        <div className="mr-[3px] flex h-[19px] shrink-0 bg-[#fcfcfc] pl-px">
          <BottomTab label="View" />
          <BottomTab label="Data" active />
        </div>
      </div>
      <div className="h-[3px] shrink-0" />
    </section>
  );
}

function Tube({ id, cx, cy, dx, dy }: { id: string; cx: number; cy: number; dx: number; dy: number }) {
  return (
    <g>
      <linearGradient id={id} gradientUnits="userSpaceOnUse" x1={cx - 30} y1={cy + 19} x2={cx + 30} y2={cy - 19}>
        <TubeStops />
      </linearGradient>
      <ellipse cx={cx} cy={cy} rx="35" ry="28" transform={`rotate(-30 ${cx} ${cy})`} fill={`url(#${id})`} />
      <path
        d={`M${cx - 30} ${cy + 18}L${cx - 30 + dx} ${cy + 18 + dy}L${cx + 30 + dx} ${cy - 18 + dy}L${cx + 30} ${cy - 18}Z`}
        fill={`url(#${id})`}
      />
    </g>
  );
}

function TubeStops() {
  return (
    <>
      <stop offset="0" stopColor="#45dc4b" />
      <stop offset="0.060" stopColor="#66f966" />
      <stop offset="0.250" stopColor="#8dff8d" />
      <stop offset="0.500" stopColor="#abffab" />
      <stop offset="0.650" stopColor="#a3ffa3" />
      <stop offset="0.850" stopColor="#7cff7c" />
      <stop offset="0.950" stopColor="#5cf75c" />
      <stop offset="1" stopColor="#3ed044" />
    </>
  );
}

function Flange({ x, y }: { x: number; y: number }) {
  const large = "M928 371C916 360 900 357 884 359C848 364 811 398 808 432C806 464 828 484 858 484L873 483L888 430L903 396Z";
  return (
    <g transform={`translate(${x} ${y})`}>
      <path d={large} fill="#58d860" transform="translate(-1 -1)" />
      <path d={large} fill="#b0ffb0" />
      <path d="M932 376C944 386 949 402 948 413C947 426 942 438 934 448L907 401Z" fill="#b0ffb0" />
    </g>
  );
}

function Scene() {
  return (
    <svg viewBox="532 137 745 496" preserveAspectRatio="xMidYMin slice" className="absolute inset-0 h-full w-full" aria-label="3D view" role="img">
      <defs>
        <linearGradient id="shaft" gradientUnits="userSpaceOnUse" x1="659" y1="137" x2="720" y2="99">
          <TubeStops />
        </linearGradient>
        <linearGradient id="bore" gradientUnits="userSpaceOnUse" x1="948" y1="580" x2="988" y2="558">
          <stop offset="0" stopColor="#63f463" />
          <stop offset="0.450" stopColor="#97ff97" />
          <stop offset="0.750" stopColor="#83ff83" />
          <stop offset="1" stopColor="#4bec4f" />
        </linearGradient>
      </defs>
      <path d="M659 137H743L895 385L840 425Z" fill="url(#shaft)" />
      <Flange x={0} y={0} />
      <Tube id="mid" cx={876} cy={421} dx={50} dy={81} />
      <Flange x={66} y={107} />
      <Tube id="tip" cx={942} cy={528} dx={25} dy={40} />
      <ellipse cx="967.500" cy="569.500" rx="35" ry="28.500" transform="rotate(-30 967.500 569.500)" fill="#b3ffb3" />
      <ellipse cx="967" cy="569.500" rx="24" ry="18.500" transform="rotate(-30 967 569.500)" fill="url(#bore)" />

      <circle cx="878.500" cy="242.500" r="27.500" fill="#333399" />
      <g transform="translate(872 235)" fill="#fff" stroke="#000" strokeLinejoin="round">
        <path d="M2 6C2 1 8 -1 12 2L15 0V6H8L10 4C8 3 5 3 5 6Z" />
        <path d="M13 8C13 13 7 15 3 12L0 14V8H7L5 10C7 11 10 11 10 8Z" />
      </g>

      <g fill="#a3a3bf">
        <path d="M1214.500 143L1226 154H1203ZM1214.500 267L1226 256H1203ZM1153 205L1164 194V216ZM1275 205L1264 194V216Z" />
        <path d="M1168 177L1173 161L1177 165C1184 158 1189 153 1197 150L1199 156C1191 159 1186 163 1181 168L1185 172Z" />
        <path d="M1261 177L1256 161L1252 165C1245 158 1240 153 1232 150L1230 156C1238 159 1243 163 1248 168L1244 172Z" />
      </g>
      <path d="M1209 168L1218 168L1250 203L1252 214L1218 241L1208 241L1184 227L1177 215L1180 195Z" fill="#b8bcd0" stroke="#8d91ab" />
      <path d="M1205 170C1210 166 1214 167 1219 173C1224 180 1218 190 1211 196L1194 210C1188 212 1186 207 1184 201C1181 196 1186 189 1190 184Z" fill="#dcdfea" />
      <path d="M1209 219L1238 196C1243 198 1249 204 1250 211C1249 219 1226 236 1218 240C1212 240 1208 229 1209 219Z" fill="#dcdfea" />
      <path d="M1189 212L1208 220L1209 236L1196 229Z" fill="#ccd0df" />
      <path d="M1219 168L1251 207M1226 173L1252 205" stroke="#5f637f" strokeWidth="0.700" fill="none" />
      <circle cx="1228" cy="190" r="7" fill="#d4e2ee" stroke="#9fa5bd" />
      <circle cx="1190" cy="226" r="6" fill="#d3d8e8" />
      <path d="M1184 200L1204 213L1212 234M1212 212L1224 200" stroke="#666b85" strokeWidth="0.700" fill="none" />
      <text x="1199" y="195" transform="rotate(-43 1199 192)" textAnchor="middle" fill="#111" className="font-['Liberation_Sans'] text-[9px] font-bold">FRONT</text>
      <text x="1226" y="225" transform="rotate(-39 1226 222)" textAnchor="middle" fill="#111" className="font-['Liberation_Sans'] text-[9px] font-bold">BOTTOM</text>
      <path d="M1180 234L1219 198" stroke="#cf1c36" strokeWidth="1.600" />
      <path d="M1180 234L1173 204" stroke="#1f1fe0" strokeWidth="1.800" />
      <path d="M1180 235L1211 247" stroke="#28d838" strokeWidth="1.800" />
      <text x="1173" y="197" fill="#2323cf" className="font-['Liberation_Sans'] text-[10px]">Z</text>
      <text x="1222" y="252" fill="#28a845" className="font-['Liberation_Sans'] text-[10px]">Y</text>
      <text x="1237" y="184" fill="#9a1f45" className="font-['Liberation_Sans'] text-[10px]">X</text>
      <path d="M1237 247L1245 244L1254 247V259L1245 262L1237 259Z" fill="#9c9fb4" />
      <path d="M1237 247L1245 250L1254 247L1245 244Z" fill="#b8bbca" />
      <path d="M1245 250V262L1254 259V247Z" fill="#85889f" />
      <path d="M1260 250H1269L1264.500 255Z" fill="#3f406a" />

      <g strokeWidth="1.300" fill="none">
        <path d="M1260 608L1271 598" stroke="#8a2433" />
        <path d="M1260 608L1256 600M1256 600V604" stroke="#22228c" />
        <path d="M1260 608L1266 615M1266 615V611M1266 615L1262 614" stroke="#1d7a2c" />
      </g>
      <text x="1255" y="601" fill="#222" className="font-['Liberation_Sans'] text-[9px]">Z</text>
      <text x="1272" y="597" fill="#222" className="font-['Liberation_Sans'] text-[9px]">X</text>
      <text x="1268" y="615" fill="#4b2a52" className="font-['Liberation_Sans'] text-[9px]">Y</text>
    </svg>
  );
}

function CloseBox({ hot }: { hot?: boolean }) {
  return (
    <button type="button" aria-label="Close tab" className={`${hot ? "bg-[#d5704f]" : "bg-[#b5b5b5]"} flex size-[13px] items-center justify-center rounded-[2px]`}>
      <svg viewBox="0 0 8 8" className="size-[7px]">
        <path d="M1 1L7 7M7 1L1 7" stroke="#fff" strokeWidth="1.800" />
      </svg>
    </button>
  );
}

function Viewport() {
  return (
    <section className="flex min-w-0 flex-1 flex-col">
      <div className="relative flex-1 bg-linear-to-b from-[#333366] to-[#9595ab]">
        <Scene />
      </div>
      <div role="tablist" className="flex h-[24px] shrink-0 items-start font-['Roboto','Open_Sans',sans-serif]">
        <div role="tab" aria-selected="false" className="flex h-[22px] w-[106px] items-center border-b border-[#dcdcdc] pl-[11px]">
          <FreeCadLogo size="size-[15px]" />
          <span className="ml-[3px] mr-1 whitespace-nowrap">Start page</span>
          <CloseBox />
        </div>
        <div role="tab" aria-selected="true" className="flex h-[23px] w-[124px] items-center border-r border-b border-[#dcdcdc] bg-white pl-[13px]">
          <FreeCadLogo size="size-[15px]" />
          <span className="ml-[3px] mr-1 whitespace-nowrap">Unnamed : 1*</span>
          <CloseBox hot />
        </div>
      </div>
    </section>
  );
}

function TaskButton({ label, children, state }: Kids & { label: string; state?: "active" | "open" }) {
  return (
    <button type="button" aria-label={label} className={`${state === "active" ? "bg-[#4b4b4b]" : ""} flex h-full w-[46px] flex-col items-center`}>
      <span className="flex flex-1 items-center pt-[2px]">{children}</span>
      <span className={`${state === "active" ? "w-full bg-[#76b9ed]" : state === "open" ? "w-[38px] bg-[#76b9ed]" : "w-0"} h-[2px]`} />
    </button>
  );
}

function Taskbar() {
  return (
    <footer className="flex h-[37px] shrink-0 items-center bg-[#1a1b1d] text-white">
      <button type="button" aria-label="Start" className="flex h-full w-[45px] items-center justify-center">
        <svg viewBox="0 0 16 16" className="size-[15px]" fill="#fff">
          <path d="M1 3L7 2V7.500H1ZM8 1.800L15 1V7.500H8ZM1 8.500H7V14L1 13ZM8 8.500H15V15L8 14.200Z" />
        </svg>
      </button>
      <label className="flex h-full w-[322px] items-center bg-[#f2f2f2] pl-[12px]">
        <svg viewBox="0 0 14 16" className="h-[16px] w-[14px]" fill="none" stroke="#222" strokeWidth="1.200">
          <circle cx="8" cy="6" r="4.500" />
          <path d="M5 9.500L1 15" />
        </svg>
        <input type="search" aria-label="Search" placeholder="Type here to search" className="ml-[11px] min-w-0 flex-1 bg-transparent text-[13px] text-[#333] outline-none placeholder:text-[#444]" />
      </label>
      <TaskButton label="Cortana">
        <Ic size="size-4"><circle cx="11" cy="11" r="8" stroke="#fff" strokeWidth="2.600" /></Ic>
      </TaskButton>
      <TaskButton label="Task view">
        <Ic size="size-4">
          <path d="M2 1V4H14V1M2 21V18H14V21M2 8H14V14H2ZM19 1V21" stroke="#fff" strokeWidth="1.800" />
          <path d="M17 7H21V11H17Z" fill="#fff" />
        </Ic>
      </TaskButton>
      <TaskButton label="Edge">
        <Ic size="size-6">
          <circle cx="11" cy="11" r="10" fill="#1c7fd0" />
          <path d="M1 10C2 -2 20 -2 21 9C21 14 16 15 13 13C15 10 12 7 9 7C5 7 2 9 1 12Z" fill="#3fc6a3" />
          <path d="M1 10C3 0 14 0 17 4C10 2 4 5 1 12Z" fill="#2aa5dd" />
          <path d="M8 10C6 15 10 20 17 18C12 22 5 21 3 16C2 12 5 9 8 10Z" fill="#0f4f9e" />
          <path d="M9 11C8 15 12 18 18 16C16 14 14 14 13 13C14 11 11 8 9 11Z" fill="#1a1b1d" />
        </Ic>
      </TaskButton>
      <TaskButton label="File Explorer">
        <Ic>
          <path d="M1 3H8L10 5H21V19H1Z" fill="#e8a92e" />
          <path d="M1 7H21V20H1Z" fill="#fbd667" />
          <path d="M5 20V13H17V20H14V16H8V20Z" fill="#3f9fdc" />
        </Ic>
      </TaskButton>
      <TaskButton label="Store">
        <Ic size="size-6">
          <path d="M6 6V2H16V6" stroke="#3ca6dd" strokeWidth="1.500" />
          <path d="M1 5H21V19C21 20 20 21 19 21H3C2 21 1 20 1 19Z" fill="#f7f7f7" />
          <path d="M7 9H10.500V12.500H7Z" fill="#e84e27" />
          <path d="M11.500 9H15V12.500H11.500Z" fill="#7db61c" />
          <path d="M7 13.500H10.500V17H7Z" fill="#27a0e2" />
          <path d="M11.500 13.500H15V17H11.500Z" fill="#f5b31b" />
        </Ic>
      </TaskButton>
      <TaskButton label="Remote desktop">
        <Ic>
          <path d="M6 2L19 5V16L7 13Z" fill="#3d9be6" />
          <path d="M7 3L18 6V10L7 8Z" fill="#66b6f2" />
          <path d="M2 16L9 14L20 19L14 21Z" fill="#c9d2da" />
        </Ic>
      </TaskButton>
      <TaskButton label="Mail">
        <Ic size="size-6">
          <path d="M1 7L11 1L21 7V20H1Z" fill="#1673c2" />
          <path d="M3 7H19L11 14Z" fill="#f3f7fb" />
          <path d="M1 8L11 15L21 8V20H1Z" fill="#36a5ea" />
          <path d="M1 20L11 13L21 20Z" fill="#1f8bd8" />
        </Ic>
      </TaskButton>
      <TaskButton label="Media player">
        <Ic>
          <path d="M4 1L20 3V20L4 21Z" fill="#2f79ad" />
          <path d="M1 3H17V20H1Z" fill="#8ec1e2" />
          <circle cx="10" cy="11" r="6.500" fill="#f08b2c" />
          <path d="M8 7L14 11L8 15Z" fill="#fff" />
        </Ic>
      </TaskButton>
      <TaskButton label="Notepad">
        <Ic>
          <path d="M7 2L19 1L16 20L2 19Z" fill="#8ecbd0" />
          <path d="M7 2L19 1L18 6L6 8Z" fill="#d9eef0" />
          <path d="M19 1L21 3L18 20L16 20Z" fill="#e9e9e9" />
        </Ic>
      </TaskButton>
      <TaskButton label="Paint">
        <Ic size="size-6">
          <path d="M2 13C2 6 8 4 14 5C20 7 20 15 14 15C11 15 13 19 9 20C5 20 2 18 2 13Z" fill="#d7e4ee" stroke="#8ea4b4" strokeWidth="0.700" />
          <circle cx="6" cy="10" r="1.800" fill="#e84a3b" />
          <circle cx="11" cy="8" r="1.800" fill="#5cb83c" />
          <circle cx="6" cy="15" r="1.800" fill="#3a76d2" />
          <circle cx="15" cy="10" r="1.800" fill="#efc12d" />
          <path d="M12 14L19 3" stroke="#c98f47" strokeWidth="2" />
          <path d="M17 5L19 0L21 2L20 5Z" fill="#e8c58c" />
        </Ic>
      </TaskButton>
      <TaskButton label="Simulation">
        <Ic>
          <path d="M1 1L7 3H15L21 1L19 7V15L21 21L15 19H7L1 21L3 15V7Z" fill="#f7dd22" stroke="#d41a12" strokeWidth="1.400" />
          <path d="M4 4L9 9V13L4 18M18 4L13 9V13L18 18M8 3L11 8L14 3M8 19L11 14L14 19M9 11H13" stroke="#d41a12" strokeWidth="2" />
        </Ic>
      </TaskButton>
      <TaskButton label="FreeCAD" state="active">
        <Ic size="size-6">
          <path d="M1 2H13V6H6V9H11V13H6V20H1Z" fill="#ea4a1c" stroke="#9b2408" strokeWidth="0.700" />
          <path d="M14 6V21M6.500 13.500H21.500M8.500 8L19.500 19M19.500 8L8.500 19" stroke="#1d3f8f" strokeWidth="2.800" />
          <circle cx="14" cy="13.500" r="5" fill="#2a5abb" />
          <circle cx="14" cy="13.500" r="2.200" fill="#4b4b4b" />
        </Ic>
      </TaskButton>
      <TaskButton label="Bandicam" state="open">
        <Ic>
          <circle cx="11" cy="11" r="9.500" fill="#111" stroke="#f1f1f1" strokeWidth="1.500" />
          <circle cx="11" cy="11" r="5.500" fill="#e9201c" />
        </Ic>
      </TaskButton>
      <div className="ml-auto flex h-full items-center pr-[17px]">
        <Ic size="size-[14px]"><path d="M3 15L11 7L19 15" stroke="#fff" strokeWidth="1.800" /></Ic>
        <span className="ml-[7px] flex">
          <Ic size="size-[16px]">
            <path d="M8 2H14V14H8Z" fill="#fff" stroke="#fff" strokeWidth="2" strokeLinejoin="round" />
            <path d="M4 12C4 19 18 19 18 12M11 17V21" stroke="#fff" strokeWidth="1.500" />
          </Ic>
        </span>
        <span className="ml-[9px] flex">
          <Ic size="size-[14px]">
            <path d="M2 20C2 10 10 3 20 2M7 20C7 13 13 8 20 7M12 20C12 16 15 13 20 12M16 20C16 18 18 17 20 16" stroke="#ddd" strokeWidth="1.700" />
          </Ic>
        </span>
        <span className="ml-[7px] flex">
          <Ic size="size-[15px]">
            <path d="M1 8H4L10 3V19L4 14H1Z" stroke="#fff" strokeWidth="1.500" />
            <path d="M13 8C14 10 14 12 13 14M16 5C19 9 19 13 16 17M19 3C23 8 23 14 19 19" stroke="#fff" strokeWidth="1.500" />
          </Ic>
        </span>
        <div className="mx-[9px] text-center font-['Roboto','Open_Sans',sans-serif] text-[11px] leading-4">
          <div>9:26 pm</div>
          <div>01/01/2022</div>
        </div>
        <span className="ml-[6px] flex">
          <Ic size="size-[18px]"><path d="M2 3H20V17H15V21L11 17H2Z" stroke="#fff" strokeWidth="1.500" /></Ic>
        </span>
      </div>
    </footer>
  );
}

const menus = ["File", "Edit", "View", "Tools", "Macro", "Meshes", "Windows", "Help"];

export default function App() {
  return (
    <div className="relative flex min-h-screen flex-col border-x-[3px] border-black bg-[#f0f0f0] font-['Open_Sans','Noto_Sans',sans-serif] text-[11px] leading-4 text-[#1a1a1a]">
      <header className="shrink-0 border-b border-[#dedede] bg-white">
        <div className="flex h-[22px] items-center pl-[2px]">
          <FreeCadLogo />
          <h1 className="ml-[5px] flex-1">FreeCAD 0.19</h1>
          <div className="flex items-center">
            <button type="button" aria-label="Minimize" className="flex w-[42px] justify-center">
              <Ic size="size-[11px]"><path d="M1 11H21" stroke="#222" strokeWidth="2" /></Ic>
            </button>
            <button type="button" aria-label="Restore" className="flex w-[43px] justify-center">
              <Ic size="size-[11px]"><path d="M3 6H16V20H3ZM7 6V2H20V16H16" stroke="#111" strokeWidth="2" /></Ic>
            </button>
            <button type="button" aria-label="Close" className="flex w-[37px] justify-center">
              <Ic size="size-[11px]"><path d="M1 1L21 21M21 1L1 21" stroke="#222" strokeWidth="1.800" /></Ic>
            </button>
          </div>
        </div>
        <nav className="flex h-[18px] items-center">
          {menus.map((m) => (
            <button type="button" key={m} className="px-[7px] hover:bg-sky-100">{m}</button>
          ))}
        </nav>
      </header>
      <Toolbars />
      <main className="flex min-h-[519px] flex-1 gap-[5px]">
        <ComboView />
        <Viewport />
      </main>
      <div className="flex h-[26px] shrink-0 items-center pl-px font-['Roboto','Open_Sans',sans-serif]">
        <span className="flex-1">Preselected: Unnamed.Mesh. (0.432970 in, -0.610362 in, 5.682832 in)</span>
        <div className="flex h-6 items-center border-l border-[#d5d5d5] pl-[22px]">
          <svg viewBox="0 0 10 14" className="mr-1 h-[13px] w-[9px]" fill="none" stroke="#222">
            <path d="M1 5C1 0 9 0 9 5V9C9 14 1 14 1 9ZM5 2V6" />
          </svg>
          <button type="button" className="flex items-center gap-[2px]">
            CAD
            <svg viewBox="0 0 12 4" className="h-1 w-3"><path d="M3 0H9L6 4Z" fill="#222" /></svg>
          </button>
        </div>
        <div className="ml-1 flex h-6 w-[112px] items-center border-l border-[#d5d5d5] pl-1">15.37 in x 10.15 in</div>
      </div>
      <Taskbar />
      <div className="pointer-events-none absolute inset-x-0 top-[5px] flex items-baseline justify-center font-['DejaVu_Sans'] font-bold leading-[22px] text-white [-webkit-text-stroke:3px_#6b6b6b] [paint-order:stroke_fill]">
        <span className="text-[18px]">www.</span>
        <span className="text-[20px]">BANDICAM</span>
        <span className="text-[18px]">.COM</span>
      </div>
    </div>
  );
}
